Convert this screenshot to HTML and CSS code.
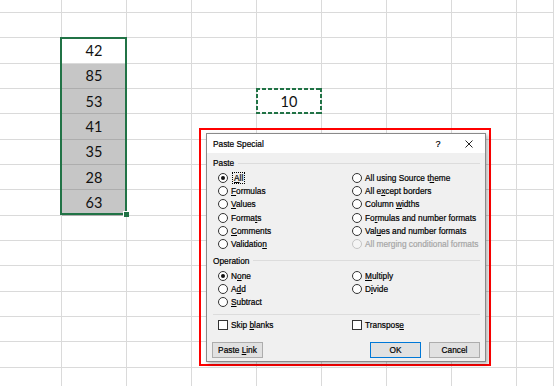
FILE: index.html
```html
<!DOCTYPE html>
<html>
<head>
<meta charset="utf-8">
<title>Paste Special</title>
<link rel="stylesheet" href="styles.css">
</head>
<body>
<div class="screen">
  <div class="sheet">
    <div class="c"></div><div class="c"></div><div class="c"></div><div class="c"></div><div class="c"></div><div class="c"></div><div class="c"></div><div class="c"></div><div class="c"></div>
    <div class="c"></div><div class="c"></div><div class="c"></div><div class="c"></div><div class="c"></div><div class="c"></div><div class="c"></div><div class="c"></div><div class="c"></div>
    <div class="c"></div><div class="c active">42</div><div class="c"></div><div class="c"></div><div class="c"></div><div class="c"></div><div class="c"></div><div class="c"></div><div class="c"></div>
    <div class="c"></div><div class="c g">85</div><div class="c"></div><div class="c"></div><div class="c"></div><div class="c"></div><div class="c"></div><div class="c"></div><div class="c"></div>
    <div class="c"></div><div class="c g">53</div><div class="c"></div><div class="c"></div><div class="c">10</div><div class="c"></div><div class="c"></div><div class="c"></div><div class="c"></div>
    <div class="c"></div><div class="c g">41</div><div class="c"></div><div class="c"></div><div class="c"></div><div class="c"></div><div class="c"></div><div class="c"></div><div class="c"></div>
    <div class="c"></div><div class="c g">35</div><div class="c"></div><div class="c"></div><div class="c"></div><div class="c"></div><div class="c"></div><div class="c"></div><div class="c"></div>
    <div class="c"></div><div class="c g">28</div><div class="c"></div><div class="c"></div><div class="c"></div><div class="c"></div><div class="c"></div><div class="c"></div><div class="c"></div>
    <div class="c"></div><div class="c g">63</div><div class="c"></div><div class="c"></div><div class="c"></div><div class="c"></div><div class="c"></div><div class="c"></div><div class="c"></div>
    <div class="c"></div><div class="c"></div><div class="c"></div><div class="c"></div><div class="c"></div><div class="c"></div><div class="c"></div><div class="c"></div><div class="c"></div>
    <div class="c"></div><div class="c"></div><div class="c"></div><div class="c"></div><div class="c"></div><div class="c"></div><div class="c"></div><div class="c"></div><div class="c"></div>
    <div class="c"></div><div class="c"></div><div class="c"></div><div class="c"></div><div class="c"></div><div class="c"></div><div class="c"></div><div class="c"></div><div class="c"></div>
    <div class="c"></div><div class="c"></div><div class="c"></div><div class="c"></div><div class="c"></div><div class="c"></div><div class="c"></div><div class="c"></div><div class="c"></div>
    <div class="c"></div><div class="c"></div><div class="c"></div><div class="c"></div><div class="c"></div><div class="c"></div><div class="c"></div><div class="c"></div><div class="c"></div>
    <div class="c"></div><div class="c"></div><div class="c"></div><div class="c"></div><div class="c"></div><div class="c"></div><div class="c"></div><div class="c"></div><div class="c"></div>
    <div class="c"></div><div class="c"></div><div class="c"></div><div class="c"></div><div class="c"></div><div class="c"></div><div class="c"></div><div class="c"></div><div class="c"></div>
  </div>

  <div class="selection"></div>
  <div class="fill-handle"></div>
  <div class="marquee"></div>
  <div class="highlight"></div>

  <div class="dialog">
    <div class="titlebar">
      <span class="title">Paste Special</span>
      <span class="help">?</span>
      <span class="close"><svg width="8" height="8" viewBox="0 0 8 8"><path d="M0.5 0.5L7.5 7.5M7.5 0.5L0.5 7.5" stroke="#222" stroke-width="1" fill="none"/></svg></span>
    </div>
    <div class="dlg-body">
      <div class="group-head"><span>Paste</span></div>
      <div class="options">
        <div class="opt"><span class="radio on"></span><span class="focus"><u>A</u>ll</span></div>
        <div class="opt"><span class="radio"></span><span>All using Source t<u>h</u>eme</span></div>
        <div class="opt"><span class="radio"></span><span><u>F</u>ormulas</span></div>
        <div class="opt"><span class="radio"></span><span>All e<u>x</u>cept borders</span></div>
        <div class="opt"><span class="radio"></span><span><u>V</u>alues</span></div>
        <div class="opt"><span class="radio"></span><span>Column <u>w</u>idths</span></div>
        <div class="opt"><span class="radio"></span><span>Forma<u>t</u>s</span></div>
        <div class="opt"><span class="radio"></span><span>Fo<u>r</u>mulas and number formats</span></div>
        <div class="opt"><span class="radio"></span><span><u>C</u>omments</span></div>
        <div class="opt"><span class="radio"></span><span>Val<u>u</u>es and number formats</span></div>
        <div class="opt"><span class="radio"></span><span>Validatio<u>n</u></span></div>
        <div class="opt disabled"><span class="radio"></span><span>All merging conditional formats</span></div>
      </div>

      <div class="group-head op-head"><span>Operation</span></div>
      <div class="options">
        <div class="opt"><span class="radio on"></span><span>N<u>o</u>ne</span></div>
        <div class="opt"><span class="radio"></span><span><u>M</u>ultiply</span></div>
        <div class="opt"><span class="radio"></span><span>A<u>d</u>d</span></div>
        <div class="opt"><span class="radio"></span><span>D<u>i</u>vide</span></div>
        <div class="opt"><span class="radio"></span><span><u>S</u>ubtract</span></div>
      </div>

      <div class="divider"></div>

      <div class="options checks">
        <div class="opt"><span class="check"></span><span>Skip <u>b</u>lanks</span></div>
        <div class="opt"><span class="check"></span><span>Transpos<u>e</u></span></div>
      </div>

      <div class="buttons">
        <span class="btn"><span>Paste <u>L</u>ink</span></span>
        <div class="btn-group">
          <span class="btn default">OK</span>
          <span class="btn">Cancel</span>
        </div>
      </div>
    </div>
  </div>
</div>
</body>
</html>
```

FILE: styles.css
```css
* { box-sizing: border-box; }
html, body { margin: 0; padding: 0; }
body {
  width: 554px;
  height: 386px;
  overflow: hidden;
  background: #fff;
}
.screen {
  position: relative;
  width: 554px;
  height: 386px;
  overflow: hidden;
}

/* spreadsheet */
.sheet {
  display: grid;
  grid-template-columns: 62px repeat(7, 65px) 37px;
  grid-template-rows: 13px repeat(15, 25.33px);
  font-family: Lato, "Liberation Sans", sans-serif;
  font-size: 14.5px;
  color: #111;
}
.c {
  border-right: 1px solid #dadada;
  border-bottom: 1px solid #dadada;
  display: flex;
  align-items: center;
  justify-content: center;
}
.c.g {
  background: #c6c6c6;
  border-bottom-color: #adadad;
  border-right-color: #c6c6c6;
}
.selection {
  position: absolute;
  left: 60px;
  top: 37px;
  width: 67px;
  height: 178px;
  border: 2px solid #217346;
}
.fill-handle {
  position: absolute;
  left: 123px;
  top: 211px;
  width: 6px;
  height: 6px;
  background: #217346;
  border: 1px solid #fff;
  border-right: none;
  border-bottom: none;
}
.marquee {
  position: absolute;
  left: 256px;
  top: 88px;
  width: 66px;
  height: 26px;
  background:
    repeating-linear-gradient(90deg, #217346 0 4px, transparent 4px 6px) left top / 100% 2px no-repeat,
    repeating-linear-gradient(90deg, #217346 0 4px, transparent 4px 6px) left bottom / 100% 2px no-repeat,
    repeating-linear-gradient(180deg, #217346 0 4px, transparent 4px 6px) left top / 2px 100% no-repeat,
    repeating-linear-gradient(180deg, #217346 0 4px, transparent 4px 6px) right top / 2px 100% no-repeat;
}
.highlight {
  position: absolute;
  left: 199px;
  top: 128px;
  width: 292px;
  height: 238px;
  border: 2px solid #ff0000;
}

/* dialog */
.dialog {
  position: absolute;
  left: 206px;
  top: 133px;
  width: 280px;
  border: 1px solid #8a8a8a;
  box-shadow: 2px 2px 4px rgba(0, 0, 0, 0.3);
  background: #f0f0f0;
  font-family: "Liberation Sans", Arial, sans-serif;
  font-size: 8.3px;
  color: #000;
  -webkit-text-stroke: 0.2px #000;
}
.titlebar {
  height: 19px;
  background: #fff;
  display: flex;
  align-items: center;
  padding-left: 6px;
}
.title { flex: 1; }
.help {
  width: 10px;
  text-align: center;
  margin-right: 19px;
  font-size: 9px;
}
.close {
  width: 14px;
  margin-right: 9px;
  display: flex;
  justify-content: center;
}
.close svg { display: block; }

.dlg-body {
  padding: 4px 5px 3px 5px;
}
.group-head {
  height: 12px;
  display: flex;
  align-items: center;
  gap: 4px;
  padding-left: 1px;
}
.group-head::after {
  content: "";
  flex: 1;
  border-top: 1px solid #dcdcdc;
}
.op-head { margin-top: 4px; }

.options {
  margin-top: 2px;
  padding-left: 6px;
  display: grid;
  grid-template-columns: 134px 1fr;
  grid-auto-rows: 13.33px;
}
.opt {
  display: flex;
  align-items: center;
  gap: 3px;
  white-space: nowrap;
}
.radio {
  flex: none;
  width: 10px;
  height: 10px;
  border: 1px solid #333;
  border-radius: 50%;
  background: #fff;
  display: flex;
  align-items: center;
  justify-content: center;
}
.radio.on::after {
  content: "";
  width: 4px;
  height: 4px;
  border-radius: 50%;
  background: #111;
}
.focus {
  outline: 1px dotted #000;
  outline-offset: 0;
  padding: 0 1px;
  margin-left: 2px;
}
.opt.disabled {
  color: #a6a6a6;
  -webkit-text-stroke: 0.2px #a6a6a6;
}
.opt.disabled .radio {
  border-color: #c4c4c4;
  background: #f5f5f5;
}
.check {
  flex: none;
  width: 10px;
  height: 10px;
  border: 1px solid #333;
  background: #fff;
}
.divider {
  margin-top: 5px;
  margin-left: 1px;
  border-top: 1px solid #dcdcdc;
}
.checks {
  margin-top: 4px;
  grid-auto-rows: 13px;
}
.buttons {
  margin-top: 10px;
  display: flex;
  justify-content: space-between;
}
.btn-group {
  display: flex;
  gap: 8px;
}
.btn {
  width: 51px;
  height: 16px;
  border: 1px solid #adadad;
  background: #e1e1e1;
  display: flex;
  align-items: center;
  justify-content: center;
  white-space: nowrap;
}
.btn.default {
  border-color: #0078d7;
}
```
